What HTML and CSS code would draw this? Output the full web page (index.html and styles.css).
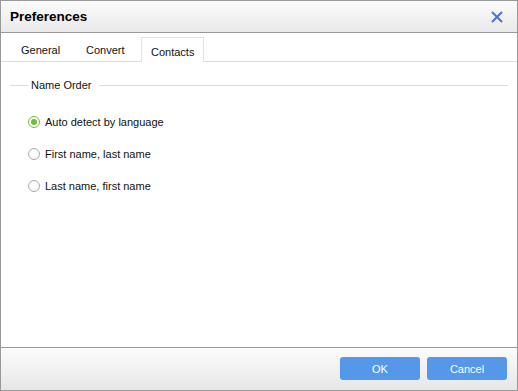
FILE: index.html
```html
<!DOCTYPE html>
<html>
<head>
<meta charset="utf-8">
<link rel="stylesheet" href="styles.css">
</head>
<body>
<div class="window">
  <div class="titlebar">
    <span class="title">Preferences</span>
    <svg class="close" width="12" height="12" viewBox="0 0 12 12"><path d="M1 1L11 11M11 1L1 11" stroke="#4a72d8" stroke-width="2" fill="none"/></svg>
  </div>
  <div class="content">
    <div class="tabs">
      <div class="tab">General</div>
      <div class="tab">Convert</div>
      <div class="tab active">Contacts</div>
    </div>
    <div class="group">
      <div class="legend"><span class="lline short"></span><span class="ltext">Name Order</span><span class="lline"></span></div>
      <label class="radio checked"><span class="dot"></span>Auto detect by language</label>
      <label class="radio"><span class="dot"></span>First name, last name</label>
      <label class="radio"><span class="dot"></span>Last name, first name</label>
    </div>
  </div>
  <div class="footer">
    <button class="btn">OK</button>
    <button class="btn">Cancel</button>
  </div>
</div>
</body>
</html>
```
FILE: styles.css
```css
html, body { margin: 0; padding: 0; }
body { width: 518px; height: 391px; font-family: "Liberation Sans", Arial, sans-serif; font-size: 11px; color: #111; }
.window { box-sizing: border-box; width: 518px; height: 391px; border: 1px solid #999; display: flex; flex-direction: column; background: #fff; }
.titlebar { height: 31px; border-bottom: 1px solid #999; background: linear-gradient(#fbfbfb, #e9e9e9); display: flex; align-items: center; justify-content: space-between; padding: 0 14px 0 9px; }
.title { font-weight: bold; font-size: 13.5px; color: #000; }
.close { display: block; }
.content { flex: 1; }
.tabs { display: flex; height: 28px; border-bottom: 1px solid #ddd; padding-left: 10px; align-items: flex-end; }
.tab { box-sizing: border-box; height: 24px; line-height: 14px; padding: 6px 10px 0 10px; }
.tab:nth-child(1) { width: 65px; }
.tab:nth-child(2) { width: 65px; }
.tab.active { border: 1px solid #e2e2e2; border-bottom: none; background: #fff; margin-bottom: -1px; height: 25px; width: 63px; padding: 7px 0 0 9px; }
.group { padding: 0 9px 0 9px; }
.legend { display: flex; align-items: center; height: 16px; margin-top: 15px; }
.lline { flex: 1; height: 1px; background: #ddd; }
.lline.short { flex: 0 0 18px; }
.ltext { padding: 0 7px 0 3px; }
.radio { display: flex; align-items: center; height: 14px; padding-left: 18px; }
.radio + .radio { margin-top: 18px; }
.legend + .radio { margin-top: 22px; }
.dot { box-sizing: border-box; width: 12px; height: 12px; border-radius: 50%; border: 1px solid #aaa; background: #fff; margin-right: 5px; position: relative; }
.radio.checked .dot { border-color: #6fbf35; }
.radio.checked .dot::after { content: ""; position: absolute; left: 2px; top: 2px; width: 6px; height: 6px; border-radius: 50%; background: #6fbf35; }
.footer { height: 43px; border-top: 1px solid #999; background: linear-gradient(#fcfcfc, #e6e6e6); display: flex; justify-content: flex-end; align-items: flex-start; padding: 9px 10px 0 0; box-sizing: border-box; gap: 7px; }
.btn { width: 80px; height: 23px; border: none; border-radius: 3px; background: #5597e8; color: #fff; font-family: "Liberation Sans", Arial, sans-serif; font-size: 11px; padding: 0; }
```
